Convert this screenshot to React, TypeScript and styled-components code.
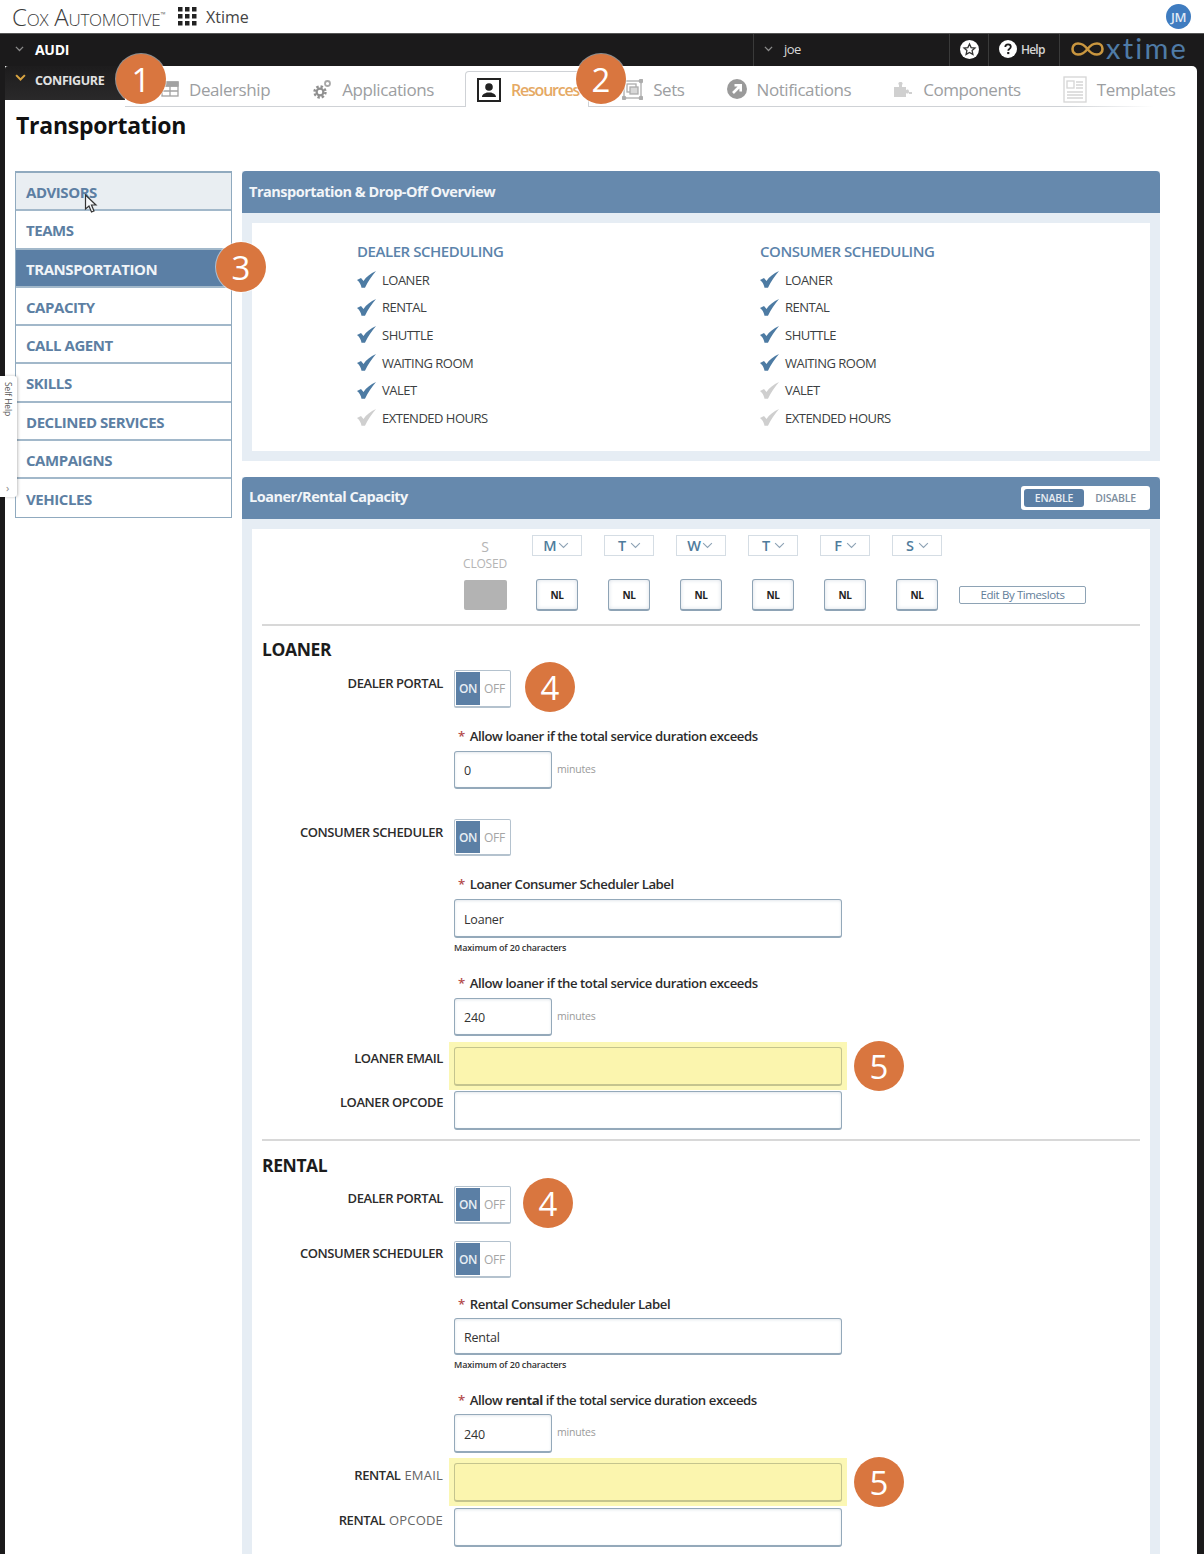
import React from 'react';
import styled, { createGlobalStyle } from 'styled-components';

const Global = createGlobalStyle`
  html, body { margin: 0; padding: 0; background: #fff; }
  body { font-family: "Open Sans", "Liberation Sans", sans-serif; color: #333; }
  * { box-sizing: border-box; }
`;

const Page = styled.div`
  position: relative;
  width: 1204px;
  height: 1554px;
  overflow: hidden;
  background: #fff;
`;

const TopBar = styled.header`
  height: 33px;
  display: flex;
  align-items: center;
  padding: 0 13px 0 12px;
`;
const CoxLogo = styled.div`
  font-family: "Open Sans", sans-serif;
  font-weight: 300;
  font-size: 24px;
  font-variant: small-caps;
  letter-spacing: -0.25px;
  color: #3c3c3c;
  width: 166px;
  white-space: nowrap;
  sup { font-size: 7px; vertical-align: 9px; line-height: 0; }
`;
const AppLabel = styled.span`
  font-size: 16px;
  color: #444;
  margin-left: 9px;
`;
const Avatar = styled.div`
  margin-left: auto;
  width: 25px;
  height: 25px;
  border-radius: 50%;
  background: #3f7cc0;
  color: #dfe9f5;
  font-size: 13px;
  font-weight: 600;
  letter-spacing: -0.5px;
  display: flex;
  align-items: center;
  justify-content: center;
`;

const DarkBar = styled.div`
  height: 33px;
  background: #1b1a1b;
  border-top: 1px solid #555;
  display: flex;
  align-items: stretch;
  color: #fff;
`;
const BarSection = styled.div<{ $w?: number; $grow?: boolean; $pl?: number }>`
  display: flex;
  align-items: center;
  ${p => (p.$w ? `width: ${p.$w}px;` : '')}
  ${p => (p.$grow ? 'flex: 1;' : '')}
  padding-left: ${p => p.$pl ?? 0}px;
  padding-bottom: 2px;
  border-left: 1px solid #3a3a3a;
  &:first-child { border-left: 0; }
`;
const AccountName = styled.span`
  font-size: 14px;
  font-weight: 700;
  letter-spacing: -0.3px;
  margin-left: 11px;
`;
const UserName = styled.span`
  font-size: 13px;
  color: #d8d8d8;
  margin-left: 11px;
  letter-spacing: -0.5px;
`;
const HelpLabel = styled.span`
  font-size: 12px;
  font-weight: 600;
  color: #d5d5d5;
  margin-left: 4px;
  letter-spacing: -0.8px;
`;
const XtimeWord = styled.span`
  font-family: "Lato", sans-serif;
  font-weight: 400;
  font-size: 29px;
  line-height: 1;
  letter-spacing: 2.2px;
  color: #4f7ba6;
  margin-left: 2px;
  margin-top: -4px;
`;

const Shell = styled.div`
  background: #1b1a1b;
  padding: 0 7px 0 5px;
  height: 1488px;
`;
const Panel = styled.div`
  background: #fff;
  height: 100%;
  border-radius: 0 5px 0 0;
`;
const NavRow = styled.nav`
  display: flex;
  align-items: flex-start;
  height: 41px;
`;
const ConfigureTab = styled.div`
  width: 120px;
  height: 34px;
  background: linear-gradient(#1d1c1d, #2a292a);
  border-radius: 3px 0 0 0;
  display: flex;
  align-items: center;
  padding: 0 0 5px 10px;
  gap: 9px;
  font-size: 12.5px;
  font-weight: 700;
  letter-spacing: -0.4px;
  color: #e2e2e2;
  flex: none;
`;
const ConfigureArrow = styled.span`
  display: flex;
  margin-top: -5px;
`;
const TabStrip = styled.div`
  flex: 1;
  height: 41px;
  display: flex;
  align-items: stretch;
  padding-left: 15px;
  background: linear-gradient(90deg, #cfd2d6 0, #cfd2d6 88%, transparent 96%) bottom / 100% 1px no-repeat;
`;
const Tab = styled.div<{ $active?: boolean }>`
  display: flex;
  align-items: center;
  gap: 10px;
  padding: 5px 21px 0;
  font-size: 17px;
  letter-spacing: -0.42px;
  color: #9c9ea1;
  white-space: nowrap;
  ${p => p.$active && `
    margin-top: 5px;
    padding: 0 9px 0 11px;
    margin-left: 10px;
    margin-right: 12px;
    background: #fff;
    border: 1px solid #cfd2d6;
    border-bottom: 0;
    border-radius: 4px 4px 0 0;
    color: #e5a964;
    font-size: 16px;
    font-weight: 600;
    letter-spacing: -1.2px;
  `}
`;

const PageTitle = styled.h1`
  margin: 0 0 0 11px;
  padding-top: 1px;
  font-size: 23px;
  line-height: 34px;
  font-weight: 700;
  color: #111;
  letter-spacing: -0.25px;
`;

const Columns = styled.div`
  display: flex;
  align-items: flex-start;
  gap: 10px;
  margin-top: 29px;
  padding-left: 10px;
`;
const SideMenu = styled.ul`
  list-style: none;
  margin: 0;
  padding: 0;
  width: 217px;
  flex: none;
  border: 1px solid #90aabf;
  border-top-width: 2px;
`;
const SideItem = styled.li<{ $active?: boolean; $hover?: boolean }>`
  height: 38.25px;
  display: flex;
  align-items: center;
  padding: 2px 0 0 10px;
  font-size: 15px;
  font-weight: 700;
  letter-spacing: -0.45px;
  color: ${p => (p.$active ? '#f0f4f8' : '#5d7fa3')};
  background: ${p => (p.$active ? '#5b7fa5' : p.$hover ? '#e9eef2' : '#fff')};
  border-bottom: 2px solid #a2b8ca;
  &:last-child { border-bottom: 0; }
`;

const MainColumn = styled.main`
  width: 918px;
  display: flex;
  flex-direction: column;
  gap: 16px;
`;
const Card = styled.section`
  background: #e6edf4;
  padding-bottom: 10px;
`;
const CardHeader = styled.div<{ $pb: number }>`
  height: 42px;
  background: #6689ad;
  border-radius: 4px 4px 0 0;
  display: flex;
  align-items: center;
  justify-content: space-between;
  padding: 0 10px ${p => p.$pb}px 7px;
  color: #f2f5f8;
  font-size: 14.5px;
  font-weight: 700;
  letter-spacing: -0.5px;
`;
const CardBody = styled.div`
  background: #fff;
  margin: 10px 10px 0;
`;

const Overview = styled.div`
  height: 228px;
  display: grid;
  grid-template-columns: 403px 1fr;
  padding: 18px 0 0 105px;
`;
const OverviewTitle = styled.div`
  font-size: 15px;
  font-weight: 600;
  line-height: 20px;
  letter-spacing: -0.45px;
  color: #5b83ab;
  margin-bottom: 5px;
`;
const CheckRow = styled.div`
  height: 27.6px;
  display: flex;
  align-items: center;
  gap: 6px;
  font-size: 13px;
  letter-spacing: -0.5px;
  color: #3c3f42;
`;

const Segmented = styled.div`
  width: 129px;
  height: 24px;
  background: #fff;
  border-radius: 3px;
  display: flex;
  padding: 3px;
  margin-top: 3px;
  font-size: 10.5px;
  font-weight: 400;
  letter-spacing: -0.2px;
`;
const SegmentOption = styled.span<{ $on?: boolean }>`
  flex: ${p => (p.$on ? '0 0 60px' : '1')};
  display: flex;
  align-items: center;
  justify-content: center;
  border-radius: 3px;
  font-weight: 600;
  color: ${p => (p.$on ? '#e8edf2' : '#7d8e9e')};
  background: ${p => (p.$on ? '#5b7fa5' : 'transparent')};
`;

const DayGrid = styled.div`
  display: grid;
  grid-template-columns: repeat(7, 72px) auto;
  grid-template-rows: 44px 32px;
  padding: 6px 0 0 197px;
  justify-items: center;
  align-items: start;
`;
const ClosedHead = styled.div`
  text-align: center;
  color: #b4b4b4;
  font-size: 14px;
  line-height: 16px;
  padding-top: 4px;
  small { display: block; font-size: 12px; letter-spacing: -0.2px; line-height: 17px; }
`;
const DaySelect = styled.div`
  width: 50px;
  height: 21px;
  border: 1px solid #d5dde4;
  display: flex;
  align-items: center;
  padding-left: 8px;
  font-size: 14.5px;
  font-weight: 600;
  color: #4f7c9c;
  background: #fff;
`;
const DayLetter = styled.span`
  width: 18px;
  text-align: center;
  margin-right: -1px;
`;
const ClosedBox = styled.div`
  width: 43px;
  height: 30px;
  background: #b3b3b3;
  border-radius: 2px;
  margin-top: 1px;
`;
const NlBox = styled.div`
  width: 42px;
  height: 32px;
  border: 1px solid #8ea3b5;
  border-bottom-width: 2px;
  border-radius: 3px;
  display: flex;
  align-items: center;
  justify-content: center;
  font-size: 10px;
  font-weight: 700;
  letter-spacing: -0.4px;
  color: #222;
  background: #fff;
  box-shadow: inset 0 0 4px #d8dfe6;
`;
const TimeslotsButton = styled.div`
  justify-self: start;
  margin: 7px 0 0 6px;
  width: 127px;
  height: 18px;
  border: 1px solid #8ea3b5;
  border-radius: 2px;
  display: flex;
  align-items: center;
  justify-content: center;
  padding-bottom: 1px;
  font-size: 11.5px;
  font-weight: 500;
  letter-spacing: -0.4px;
  color: #5f7d99;
`;

const FormArea = styled.div`
  padding: 0 10px;
  height: 1100px;
`;
const Rule = styled.hr<{ $mt: number }>`
  margin: ${p => p.$mt}px 0 0;
  border: 0;
  border-top: 2px solid #d8d8d8;
`;
const SectionTitle = styled.h2<{ $mt: number }>`
  margin: ${p => p.$mt}px 0 0;
  font-size: 17.5px;
  line-height: 20px;
  font-weight: 700;
  letter-spacing: -0.4px;
  color: #1c1c1c;
`;
const FieldRow = styled.div<{ $mt: number }>`
  display: grid;
  grid-template-columns: 181px 1fr;
  column-gap: 11px;
  margin-top: ${p => p.$mt}px;
  align-items: start;
`;
const FieldLabel = styled.label<{ $pt?: number }>`
  text-align: right;
  font-size: 13px;
  line-height: 16px;
  padding-top: ${p => p.$pt ?? 5}px;
  letter-spacing: -0.42px;
  font-weight: 600;
  color: #2c2c2c;
  white-space: nowrap;
  small { font-size: inherit; color: #666; font-weight: 400; letter-spacing: 0.2px; margin-left: 1px; }
`;
const FieldControl = styled.div`
  grid-column: 2;
  display: flex;
  align-items: center;
`;
const Required = styled.div`
  font-size: 13.2px;
  line-height: 18px;
  font-weight: 600;
  letter-spacing: -0.45px;
  color: #2c2c2c;
  padding-left: 4px;
  white-space: pre;
  &::before { content: "*"; color: #b34a4a; margin-right: 5px; }
  b { font-weight: 700; }
`;
const Input = styled.div<{ $wide?: boolean; $h: number; $tint?: boolean }>`
  width: ${p => (p.$wide ? 388 : 98)}px;
  height: ${p => p.$h}px;
  border: 1px solid ${p => (p.$tint ? '#c4c48e' : '#94a9ba')};
  border-bottom-width: 2px;
  border-radius: 3px;
  background: ${p => (p.$tint ? '#fbf5ae' : '#fff')};
  box-shadow: ${p => (p.$tint ? 'none' : 'inset 0 1px 3px #e2e7ec')};
  display: flex;
  align-items: center;
  padding: 2px 0 0 9px;
  font-size: 12.5px;
  color: #333;
  letter-spacing: -0.2px;
`;
const Unit = styled.span`
  font-size: 10.5px;
  color: #9a9a9a;
  margin: -3px 0 0 5px;
  letter-spacing: -0.2px;
`;
const Hint = styled.div`
  margin-top: 3px;
  font-size: 9px;
  line-height: 14px;
  font-weight: 600;
  letter-spacing: -0.15px;
  color: #333;
`;
const Highlight = styled.div`
  margin-left: -5px;
  padding: 5px 5px 4px;
  background: #fbf7b4;
`;
const Switch = styled.div<{ $h: number }>`
  width: 57px;
  height: ${p => p.$h}px;
  border: 1px solid #b4c2ce;
  border-bottom-width: 2px;
  border-radius: 2px;
  padding: 1px;
  display: flex;
  background: #fff;
  font-size: 12px;
  font-weight: 600;
  letter-spacing: -0.3px;
`;
const SwitchOn = styled.span`
  width: 24px;
  background: #5b7fa5;
  color: #e8eef4;
  display: flex;
  align-items: center;
  justify-content: center;
`;
const SwitchOff = styled.span`
  flex: 1;
  color: #a5a5a5;
  display: flex;
  align-items: center;
  justify-content: center;
  font-weight: 400;
`;

const Callout = styled.div<{ $x: number; $y: number }>`
  position: absolute;
  left: ${p => p.$x - 25}px;
  top: ${p => p.$y - 25}px;
  width: 50px;
  height: 50px;
  border-radius: 50%;
  background: #d9763f;
  color: #fff;
  display: flex;
  align-items: center;
  justify-content: center;
  font-size: 33px;
  line-height: 1;
  box-shadow: 0 0 0 1px rgba(255,255,255,.5);
`;
const SelfHelp = styled.div`
  position: absolute;
  left: 0;
  top: 376px;
  width: 17px;
  height: 121px;
  background: #fff;
  border-radius: 0 3px 3px 0;
  box-shadow: 1px 0 3px rgba(0,0,0,.25);
  font-size: 8.5px;
  color: #555;
`;
const SelfHelpText = styled.span`
  position: absolute;
  top: 6px;
  left: 3px;
  writing-mode: vertical-rl;
  letter-spacing: -0.1px;
`;
const SelfHelpArrow = styled.span`
  position: absolute;
  left: 6px;
  bottom: 2px;
  font-size: 11px;
  color: #888;
`;
const CursorMark = styled.svg`
  position: absolute;
  left: 84px;
  top: 194px;
`;

const Chevron = ({ color = '#8b8b8b', size = 9, weight = 1.4 }: { color?: string; size?: number; weight?: number }) => (
  <svg width={size} height={size * 0.7} viewBox="0 0 10 7" fill="none">
    <path d="M1 1l4 4 4-4" stroke={color} strokeWidth={weight} />
  </svg>
);
const Check = ({ off }: { off?: boolean }) => (
  <svg width="19" height="17" viewBox="0 0 19 17">
    <path d="M0 9 L4 7 L6.500 10 C9 6 13.500 2.500 19 0 C15 5 11 10 8 16.800 L4.500 16.800 C4 13.500 2.500 11 0 9Z" fill={off ? '#cfcfcf' : '#4d7ba3'} />
  </svg>
);
const GridDots = () => (
  <svg width="19" height="19" viewBox="0 0 19 19" fill="#222">
    {[0, 7, 14].flatMap(y => [0, 7, 14].map(x => <rect key={`${x}-${y}`} x={x} y={y} width="4.500" height="4.500" />))}
  </svg>
);
const InfinityMark = () => (
  <svg width="33" height="16" viewBox="0 0 33 16" fill="none">
    <path d="M16.500 8C13 3.500 11 2.500 7 2.500 3.500 2.500 1.500 5 1.500 8s2 5.500 5.500 5.500c4 0 6-1 9.500-5.500s5.500-5.500 9.500-5.500c3.500 0 5.500 2.500 5.500 5.500s-2 5.500-5.500 5.500c-4 0-6-1-9.500-5.500Z" stroke="#c9963f" strokeWidth="2.600" strokeLinejoin="round" />
  </svg>
);
const StarIcon = () => (
  <svg width="19" height="19" viewBox="0 0 19 19">
    <circle cx="9.500" cy="9.500" r="9.500" fill="#fff" />
    <path d="M9.500 4l1.600 3.600 3.900.4-2.900 2.600.8 3.800-3.400-2-3.400 2 .8-3.800L4 8l3.900-.4z" fill="none" stroke="#333" strokeWidth="1.300" />
  </svg>
);
const HelpIcon = () => (
  <svg width="18" height="18" viewBox="0 0 18 18">
    <circle cx="9" cy="9" r="9" fill="#fff" />
    <path d="M6.300 7c0-1.700 1.200-2.700 2.800-2.700S11.800 5.300 11.800 6.800c0 1.200-.8 1.800-1.500 2.300-.8.500-1 .9-1 1.700" fill="none" stroke="#1b1a1b" strokeWidth="1.800" />
    <rect x="8.200" y="12" width="2.100" height="2.100" fill="#1b1a1b" />
  </svg>
);
const DealerIcon = () => (
  <svg width="18" height="16" viewBox="0 0 18 16" fill="none" stroke="#a2a2a2" strokeWidth="1.300">
    <rect x="1" y="1" width="16" height="14" />
    <path d="M1 5h16M9 5v10M1 10h16" />
    <rect x="1" y="1" width="16" height="4" fill="#a2a2a2" />
  </svg>
);
const GearsIcon = () => (
  <svg width="20" height="21" viewBox="0 0 20 21" fill="none">
    <circle cx="8" cy="13" r="5.500" stroke="#8f8f8f" strokeWidth="2.400" strokeDasharray="2.400 1.900" />
    <circle cx="8" cy="13" r="3.400" stroke="#8f8f8f" strokeWidth="2.200" />
    <circle cx="15.500" cy="4.500" r="2.500" stroke="#a8a8a8" strokeWidth="1.800" />
  </svg>
);
const PersonIcon = () => (
  <svg width="24" height="24" viewBox="0 0 24 24">
    <rect x="1" y="1" width="22" height="22" fill="#fff" stroke="#222" strokeWidth="2" />
    <circle cx="12" cy="9" r="3.800" fill="#222" />
    <path d="M5 19c0-3 3-3.600 5-4.500h4c2 .9 5 1.500 5 4.500z" fill="#222" />
  </svg>
);
const SetsIcon = () => (
  <svg width="21" height="21" viewBox="0 0 21 21" fill="none" stroke="#adadad" strokeWidth="1.300">
    <rect x="2" y="2" width="17" height="17" />
    <rect x="5" y="5" width="9" height="8" />
    <rect x="8" y="8" width="8" height="7" fill="#d8d8d8" />
    <g fill="#adadad"><circle cx="2" cy="2" r="1.700" /><circle cx="19" cy="2" r="1.700" /><circle cx="2" cy="19" r="1.700" /><circle cx="19" cy="19" r="1.700" /></g>
  </svg>
);
const NotifyIcon = () => (
  <svg width="20" height="20" viewBox="0 0 20 20">
    <circle cx="10" cy="10" r="10" fill="#9a9a9a" />
    <path d="M6 14l6.500-6.500M7.500 6.300h6.200v6.200" fill="none" stroke="#fff" strokeWidth="2.600" />
  </svg>
);
const PuzzleIcon = () => (
  <svg width="20" height="17" viewBox="0 0 20 17" fill="#d0d0d0">
    <path d="M1 6h5V4c-1-1-1-3 1.500-3S10 3 9 4v2h4v3c1-1 3-1 3 1.500S14 13 13 12v4H1z" />
    <rect x="16" y="11" width="3" height="2" />
  </svg>
);
const TemplateIcon = () => (
  <svg width="24" height="27" viewBox="0 0 24 27" fill="none" stroke="#d5d5d5" strokeWidth="1.300">
    <rect x="1" y="1" width="22" height="25" />
    <rect x="4" y="5" width="7" height="7" />
    <path d="M13 6h7M13 9h7M13 12h7M4 16h16M4 19h16M4 22h16" />
  </svg>
);

const checks = (items: [string, boolean][]) =>
  items.map(([label, on]) => (
    <CheckRow key={label}>
      <Check off={!on} />
      {label}
    </CheckRow>
  ));

const menu = ['ADVISORS', 'TEAMS', 'TRANSPORTATION', 'CAPACITY', 'CALL AGENT', 'SKILLS', 'DECLINED SERVICES', 'CAMPAIGNS', 'VEHICLES'];
const days = ['M', 'T', 'W', 'T', 'F', 'S'];

const Toggle = ({ h }: { h: number }) => (
  <Switch $h={h}>
    <SwitchOn>ON</SwitchOn>
    <SwitchOff>OFF</SwitchOff>
  </Switch>
);

export default function App() {
  return (
    <Page>
      <Global />
      <TopBar>
        <CoxLogo>Cox Automotive<sup>™</sup></CoxLogo>
        <GridDots />
        <AppLabel>Xtime</AppLabel>
        <Avatar>JM</Avatar>
      </TopBar>
      <DarkBar>
        <BarSection $w={753} $pl={15}>
          <Chevron />
          <AccountName>AUDI</AccountName>
        </BarSection>
        <BarSection $w={196} $pl={10}>
          <Chevron />
          <UserName>joe</UserName>
        </BarSection>
        <BarSection $w={39} $pl={10}>
          <StarIcon />
        </BarSection>
        <BarSection $w={71} $pl={10}>
          <HelpIcon />
          <HelpLabel>Help</HelpLabel>
        </BarSection>
        <BarSection $grow $pl={11}>
          <InfinityMark />
          <XtimeWord>xtime</XtimeWord>
        </BarSection>
      </DarkBar>
      <Shell>
        <Panel>
          <NavRow>
            <ConfigureTab>
              <ConfigureArrow><Chevron color="#d9a441" size={11} weight={1.8} /></ConfigureArrow>
              CONFIGURE
            </ConfigureTab>
            <TabStrip>
              <Tab><DealerIcon />Dealership</Tab>
              <Tab><GearsIcon />Applications</Tab>
              <Tab $active><PersonIcon />Resources</Tab>
              <Tab><SetsIcon />Sets</Tab>
              <Tab><NotifyIcon />Notifications</Tab>
              <Tab><PuzzleIcon />Components</Tab>
              <Tab><TemplateIcon />Templates</Tab>
            </TabStrip>
          </NavRow>
          <PageTitle>Transportation</PageTitle>
          <Columns>
            <SideMenu>
              {menu.map((m, i) => (
                <SideItem key={m} $active={i === 2} $hover={i === 0}>{m}</SideItem>
              ))}
            </SideMenu>
            <MainColumn>
              <Card>
                <CardHeader $pb={2}>Transportation &amp; Drop-Off Overview</CardHeader>
                <CardBody>
                  <Overview>
                    <div>
                      <OverviewTitle>DEALER SCHEDULING</OverviewTitle>
                      {checks([['LOANER', true], ['RENTAL', true], ['SHUTTLE', true], ['WAITING ROOM', true], ['VALET', true], ['EXTENDED HOURS', false]])}
                    </div>
                    <div>
                      <OverviewTitle>CONSUMER SCHEDULING</OverviewTitle>
                      {checks([['LOANER', true], ['RENTAL', true], ['SHUTTLE', true], ['WAITING ROOM', true], ['VALET', false], ['EXTENDED HOURS', false]])}
                    </div>
                  </Overview>
                </CardBody>
              </Card>
              <Card>
                <CardHeader $pb={3}>
                  Loaner/Rental Capacity
                  <Segmented>
                    <SegmentOption $on>ENABLE</SegmentOption>
                    <SegmentOption>DISABLE</SegmentOption>
                  </Segmented>
                </CardHeader>
                <CardBody>
                  <DayGrid>
                    <ClosedHead>S<small>CLOSED</small></ClosedHead>
                    {days.map((d, i) => (
                      <DaySelect key={i}><DayLetter>{d}</DayLetter><Chevron color="#8ea3b5" size={11} weight={1} /></DaySelect>
                    ))}
                    <span />
                    <ClosedBox />
                    {days.map((_, i) => <NlBox key={i}>NL</NlBox>)}
                    <TimeslotsButton>Edit By Timeslots</TimeslotsButton>
                  </DayGrid>
                  <FormArea>
                    <Rule $mt={13} />
                    <SectionTitle $mt={13}>LOANER</SectionTitle>
                    <FieldRow $mt={11}>
                      <FieldLabel>DEALER PORTAL</FieldLabel>
                      <FieldControl><Toggle h={38} /></FieldControl>
                    </FieldRow>
                    <FieldRow $mt={19}>
                      <FieldControl><Required>Allow loaner if the total service duration exceeds</Required></FieldControl>
                    </FieldRow>
                    <FieldRow $mt={6}>
                      <FieldControl><Input $h={38}>0</Input><Unit>minutes</Unit></FieldControl>
                    </FieldRow>
                    <FieldRow $mt={30}>
                      <FieldLabel>CONSUMER SCHEDULER</FieldLabel>
                      <FieldControl><Toggle h={37} /></FieldControl>
                    </FieldRow>
                    <FieldRow $mt={19}>
                      <FieldControl><Required>Loaner Consumer Scheduler Label</Required></FieldControl>
                    </FieldRow>
                    <FieldRow $mt={6}>
                      <FieldControl><Input $wide $h={39}>Loaner</Input></FieldControl>
                      <FieldControl><Hint>Maximum of 20 characters</Hint></FieldControl>
                    </FieldRow>
                    <FieldRow $mt={19}>
                      <FieldControl><Required>Allow loaner if the total service duration exceeds</Required></FieldControl>
                    </FieldRow>
                    <FieldRow $mt={6}>
                      <FieldControl><Input $h={38}>240</Input><Unit>minutes</Unit></FieldControl>
                    </FieldRow>
                    <FieldRow $mt={6}>
                      <FieldLabel $pt={8}>LOANER EMAIL</FieldLabel>
                      <FieldControl><Highlight><Input $wide $tint $h={39} /></Highlight></FieldControl>
                    </FieldRow>
                    <FieldRow $mt={1}>
                      <FieldLabel $pt={3}>LOANER OPCODE</FieldLabel>
                      <FieldControl><Input $wide $h={39} /></FieldControl>
                    </FieldRow>
                    <Rule $mt={9} />
                    <SectionTitle $mt={14}>RENTAL</SectionTitle>
                    <FieldRow $mt={11}>
                      <FieldLabel $pt={4}>DEALER PORTAL</FieldLabel>
                      <FieldControl><Toggle h={38} /></FieldControl>
                    </FieldRow>
                    <FieldRow $mt={17}>
                      <FieldLabel $pt={4}>CONSUMER SCHEDULER</FieldLabel>
                      <FieldControl><Toggle h={37} /></FieldControl>
                    </FieldRow>
                    <FieldRow $mt={17}>
                      <FieldControl><Required>Rental Consumer Scheduler Label</Required></FieldControl>
                    </FieldRow>
                    <FieldRow $mt={5}>
                      <FieldControl><Input $wide $h={37}>Rental</Input></FieldControl>
                      <FieldControl><Hint>Maximum of 20 characters</Hint></FieldControl>
                    </FieldRow>
                    <FieldRow $mt={19}>
                      <FieldControl><Required>Allow <b>rental</b> if the total service duration exceeds</Required></FieldControl>
                    </FieldRow>
                    <FieldRow $mt={5}>
                      <FieldControl><Input $h={39}>240</Input><Unit>minutes</Unit></FieldControl>
                    </FieldRow>
                    <FieldRow $mt={5}>
                      <FieldLabel $pt={9}>RENTAL <small>EMAIL</small></FieldLabel>
                      <FieldControl><Highlight><Input $wide $tint $h={39} /></Highlight></FieldControl>
                    </FieldRow>
                    <FieldRow $mt={2}>
                      <FieldLabel $pt={4}>RENTAL <small>OPCODE</small></FieldLabel>
                      <FieldControl><Input $wide $h={39} /></FieldControl>
                    </FieldRow>
                  </FormArea>
                </CardBody>
              </Card>
            </MainColumn>
          </Columns>
        </Panel>
      </Shell>
      <SelfHelp>
        <SelfHelpText>Self Help</SelfHelpText>
        <SelfHelpArrow>›</SelfHelpArrow>
      </SelfHelp>
      <CursorMark width="14" height="20" viewBox="0 0 14 20">
        <path d="M1.500 1v14l3.500-3 2.500 6 2.500-1-2.500-6h4.500z" fill="#f4f6f8" stroke="#333" strokeWidth="1.200" />
      </CursorMark>
      <Callout $x={141} $y={79}>1</Callout>
      <Callout $x={601} $y={79}>2</Callout>
      <Callout $x={241} $y={267}>3</Callout>
      <Callout $x={550} $y={687}>4</Callout>
      <Callout $x={879} $y={1066}>5</Callout>
      <Callout $x={548} $y={1203}>4</Callout>
      <Callout $x={879} $y={1482}>5</Callout>
    </Page>
  );
}
